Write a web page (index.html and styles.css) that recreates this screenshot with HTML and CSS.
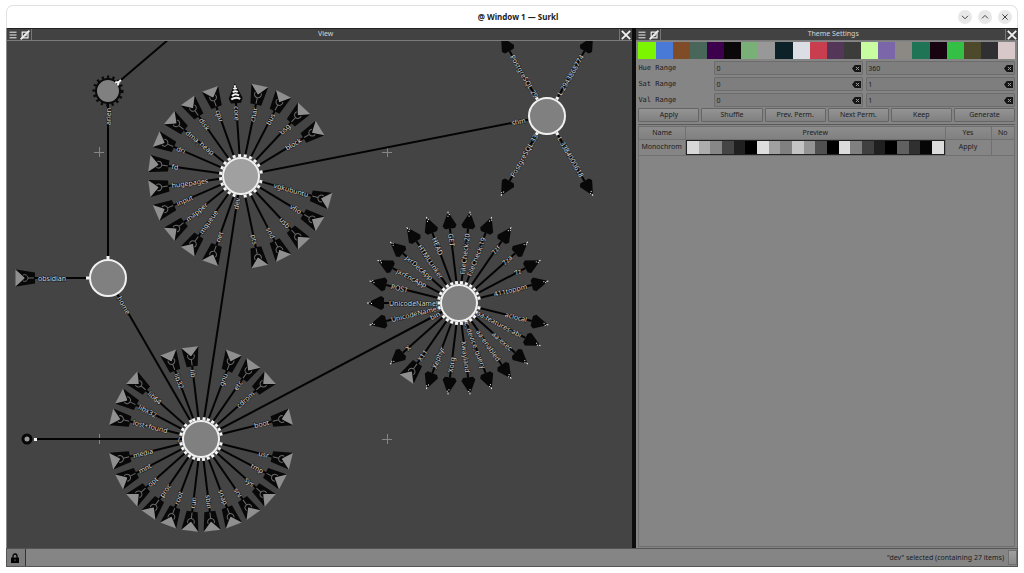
FILE: index.html
```html
<!DOCTYPE html>
<html lang="en">
<head>
<meta charset="utf-8">
<title>@ Window 1 — Surkl</title>
<link rel="stylesheet" href="styles.css">
</head>
<body>
<svg class="defs" aria-hidden="true">
  <symbol id="i-menu" viewBox="0 0 8 8"><path d="M.5 1.2h7M.5 4h7M.5 6.8h7" stroke="#eee" stroke-width="1"/></symbol>
  <symbol id="i-split" viewBox="0 0 10 10"><path d="M2.2 2.2h5.8v5.6H2.2z" fill="none" stroke="#eee" stroke-width="1.2"/><path d="M4.5 4.2h2v2h-2z" fill="#eee"/><path d="M.6 9.4L9.4.6" stroke="#eee" stroke-width="1.8"/></symbol>
  <symbol id="i-close" viewBox="0 0 10 10"><path d="M.8.8l8.4 8.4M9.2.8L.8 9.2" stroke="#f2f2f2" stroke-width="1.8"/></symbol>
  <symbol id="i-clear" viewBox="0 0 9 7"><path d="M0 3.5L2.8 0H9v7H2.8z" fill="#151515"/><path d="M3.9 1.9l3.2 3.2M7.1 1.9L3.9 5.1" stroke="#999" stroke-width="1"/></symbol>
  <symbol id="i-lock" viewBox="0 0 8 10"><path d="M2 5V3a2 2 0 0 1 4 0v2" fill="none" stroke="#000" stroke-width="1.3"/><path d="M0 4.6h8V10H0z"/><path d="M3.6 6.2h.8v2h-.8z" fill="#777"/></symbol>
</svg>
<div class="window">
  <header class="titlebar">
    <h1 class="titlebar__text">@ Window 1 — Surkl</h1>
    <div class="titlebar__buttons">
      <button class="wm" aria-label="Minimize"><svg viewBox="0 0 14 14"><path d="M4 5.8l3 3 3-3"/></svg></button>
      <button class="wm" aria-label="Maximize"><svg viewBox="0 0 14 14"><path d="M4 8.4l3-3 3 3"/></svg></button>
      <button class="wm" aria-label="Close"><svg viewBox="0 0 14 14"><path d="M4.4 4.4l5.2 5.2M9.6 4.4L4.4 9.6"/></svg></button>
    </div>
  </header>

  <main class="workspace">
    <section class="pane pane--view">
      <div class="pane__head">
        <button class="tool" aria-label="Menu"><svg class="ic8"><use href="#i-menu"/></svg></button>
        <button class="tool" aria-label="Split"><svg class="ic10"><use href="#i-split"/></svg></button>
        <h2 class="pane__title">View</h2>
        <button class="tool tool--close" aria-label="Close view"><svg class="ic10"><use href="#i-close"/></svg></button>
      </div>
      <div class="canvas"><svg id="graph" class="graph" role="img" aria-label="File tree"></svg></div>
    </section>

    <section class="pane pane--theme">
      <div class="pane__head">
        <button class="tool" aria-label="Menu"><svg class="ic8"><use href="#i-menu"/></svg></button>
        <button class="tool" aria-label="Split"><svg class="ic10"><use href="#i-split"/></svg></button>
        <h2 class="pane__title">Theme Settings</h2>
        <button class="tool tool--close" aria-label="Close theme settings"><svg class="ic10"><use href="#i-close"/></svg></button>
      </div>
      <div class="theme">
        <div class="palette" id="palette"></div>
        <form class="ranges">
          <label for="hue-min">Hue Range</label>
          <span class="field"><input id="hue-min" value="0"><button type="button" aria-label="Clear"><svg><use href="#i-clear"/></svg></button></span>
          <span class="field"><input aria-label="Hue maximum" value="360"><button type="button" aria-label="Clear"><svg><use href="#i-clear"/></svg></button></span>
          <label for="sat-min">Sat Range</label>
          <span class="field"><input id="sat-min" value="0"><button type="button" aria-label="Clear"><svg><use href="#i-clear"/></svg></button></span>
          <span class="field"><input aria-label="Saturation maximum" value="1"><button type="button" aria-label="Clear"><svg><use href="#i-clear"/></svg></button></span>
          <label for="val-min">Val Range</label>
          <span class="field"><input id="val-min" value="0"><button type="button" aria-label="Clear"><svg><use href="#i-clear"/></svg></button></span>
          <span class="field"><input aria-label="Value maximum" value="1"><button type="button" aria-label="Clear"><svg><use href="#i-clear"/></svg></button></span>
        </form>
        <div class="actions">
          <button>Apply</button><button>Shuffle</button><button>Prev. Perm.</button><button>Next Perm.</button><button>Keep</button><button>Generate</button>
        </div>
        <div class="saved">
          <table>
            <thead><tr><th class="col-name">Name</th><th>Preview</th><th class="col-yes">Yes</th><th class="col-no">No</th></tr></thead>
            <tbody><tr><td class="name">Monochrom</td><td class="preview"><div class="palette palette--small" id="preview"></div></td><td class="yes"><button>Apply</button></td><td></td></tr></tbody>
          </table>
        </div>
      </div>
    </section>
  </main>

  <footer class="status">
    <button class="status__lock" aria-label="Lock"><svg><use href="#i-lock"/></svg></button>
    <div class="status__field"><span>"dev" selected (containing 27 items)</span><i class="status__grip"></i></div>
  </footer>
</div>
<script src="graph.js"></script>
</body>
</html>
```

FILE: styles.css
```css
* { box-sizing: border-box; }
body {
  margin: 0;
  background: #fff;
  color: #1c1c1c;
  font: 7px/10px "Noto Sans", sans-serif;
}
button, input { font: inherit; color: inherit; margin: 0; padding: 0; border: 0; background: none; }
button { display: flex; align-items: center; justify-content: center; }
h1, h2 { margin: 0; font-size: inherit; }
.defs { position: absolute; width: 0; height: 0; }

.window { display: flex; flex-direction: column; height: 100vh; padding: 5px 6px 6px; }

.titlebar {
  display: grid;
  grid-template-columns: 1fr auto 1fr;
  align-items: center;
  flex: none;
  height: 23px;
  padding-left: 12px;
  border: 1px solid #e2e2e2;
  border-bottom: 0;
  border-radius: 7px 7px 0 0;
}
.titlebar__text { grid-column: 2; font-size: 8px; font-weight: 700; color: #222; }
.titlebar__buttons { display: flex; justify-content: flex-end; gap: 6px; padding-right: 5px; }
.wm { width: 14px; height: 14px; border-radius: 50%; background: #e8e8e8; }
.wm svg { width: 14px; height: 14px; fill: none; stroke: #444; stroke-width: 1; }

.workspace { display: grid; grid-template-columns: minmax(0, 626fr) minmax(0, 382fr); gap: 4px; flex: 1; min-height: 0; background: #0c0c0c; border-left: 1px solid #888; }
.pane { display: flex; flex-direction: column; min-width: 0; min-height: 0; }
.pane__head { display: flex; align-items: stretch; flex: none; height: 13px; background: #424242; border-top: 1px solid #222; border-bottom: 1px solid #7c7c7c; }
.pane__title { flex: 1; text-align: center; font-weight: 400; line-height: 10px; color: #d4d4d4; border-left: 1px solid #777; }
.tool { width: 12px; }
.tool--close { width: 13px; border-left: 1px solid #777; }
.ic8 { width: 8px; height: 8px; }
.ic10 { width: 10px; height: 10px; }

.canvas { flex: 1; min-height: 0; overflow: hidden; background: #444; }
.graph { display: block; width: 100%; height: 100%; }
.spoke { stroke: #040404; stroke-width: 2; }
.tick { fill: #f4f4f4; }
.hub { fill: #808080; stroke: #f0f0f0; stroke-width: 2; }
.hub--selected { fill: #a0a0a0; }
.hub--closed { fill: #808080; stroke: #0a0a0a; stroke-width: 2; }
.teeth { fill: none; stroke: #0a0a0a; stroke-width: 5; stroke-dasharray: 2 3; }
.root-dot { fill: #999; stroke: #060606; stroke-width: 3; }
.cross { stroke: #858585; stroke-width: 1; }
.label { font-size: 7px; fill: #d2d2d2; stroke: #161616; stroke-width: 1; paint-order: stroke; dominant-baseline: central; }
.dark { fill: #080808; }
.flap { fill: #8f8f8f; }
.thin { fill: none; stroke: #6a6a6a; stroke-width: 1; }
.bright { fill: #f4f4f4; }

.theme { display: flex; flex-direction: column; flex: 1; min-height: 0; padding: 1px 2px; background: #858585; border-right: 1px solid #666; }
.palette { display: flex; flex: none; height: 17px; }
.swatch { flex: 1; }
.palette--small { height: 15px; border: 1px solid #222; }

.ranges { display: grid; grid-template-columns: 73px 1fr 1fr; gap: 2px 3px; padding-top: 2px; }
.ranges label { font: 7px/14px "DejaVu Sans Mono", monospace; }
.field { display: flex; align-items: center; height: 14px; min-width: 0; padding: 0 1px; background: #7e7e7e; border: 1px solid #6c6c6c; border-radius: 1px; }
.field input { flex: 1; min-width: 0; height: 12px; outline: 0; }
.field svg { width: 9px; height: 7px; }

.actions { display: grid; grid-template-columns: repeat(6, 1fr); gap: 2px; flex: none; padding: 1px 0 2px; border-bottom: 1px solid #5a5a5a; }
.actions button { height: 14px; background: linear-gradient(#949494, #808080); border: 1px solid #656565; border-radius: 1px; }

.saved { flex: 1; min-height: 0; margin-top: 1px; border: 1px solid #6e6e6e; }
table { width: 100%; table-layout: fixed; border-collapse: collapse; }
th { height: 12px; padding: 0; font-weight: 400; background: linear-gradient(#8c8c8c, #808080); border-right: 1px solid #707070; border-bottom: 1px solid #707070; }
td { height: 15px; padding: 0; border-right: 1px solid #707070; border-bottom: 1px solid #707070; }
th:last-child, td:last-child { border-right: 0; }
.col-name { width: 46px; }
.col-yes { width: 46px; }
.col-no { width: 23px; }
.name { padding-left: 2px; white-space: nowrap; }
.yes button { width: 100%; height: 14px; }

.status { display: flex; flex: none; height: 19px; background: #858585; border: 1px solid #555; }
.status__lock { width: 19px; padding-right: 2px; background: #7c7c7c; border-right: 1px solid #333; }
.status__lock svg { width: 8px; height: 10px; }
.status__field { display: flex; flex: 1; align-items: center; justify-content: flex-end; gap: 4px; }
.status__grip { width: 9px; height: 15px; background: linear-gradient(#a0a0a0, #8a8a8a); border: 1px solid #707070; }
```

FILE: graph.js
```javascript
const themeColors = ["#7cf500","#4a7ad8","#804c28","#48665a","#3c004c","#0a0808","#78b078","#989898","#0c2228","#dcdee6","#c83e4e","#533658","#3c3c3a","#c8fca0","#7a66a8","#8c8884","#207456","#180410","#34c044","#4c4a2a","#303032","#d8c8ca"];
const monochrome = ["#d8d8d8","#adadad","#878787","#454545","#202020","#000","#dedede","#a0a0a0","#808080","#c4c4c4","#949494","#505050","#000","#dcdcdc","#808080","#404040","#202020","#000","#606060","#303030","#060606","#dcdcdc"];

function fillPalette(id, colors) {
  const box = document.getElementById(id);
  for (const c of colors) {
    const s = document.createElement("span");
    s.className = "swatch";
    s.style.background = c;
    box.append(s);
  }
}
fillPalette("palette", themeColors);
fillPalette("preview", monochrome);

const step26 = 360 / 26, step23 = 360 / 23;
const HUB = 19, RIM = 21, LABEL = 70;

// Each item: [slot, name, kind]; the angle is slot * step, clockwise from the right.
const hubs = {
  root: { x: 194, y: 398, step: step26, items: [
    [1,"usr"],[2,"tmp"],[3,"sys"],[4,"srv"],[5,"snap"],[6,"sbin"],[7,"run"],[8,"root"],[9,"proc"],[10,"opt"],[11,"mnt"],[12,"media"],
    [14,"lost+found"],[15,"libx32"],[16,"lib64"],[18,"lib32"],[19,"lib"],[21,"gnu"],[22,"etc"],[23,"cdrom"],[25,"boot"]] },
  dev: { x: 234, y: 135, step: step23, selected: true, items: [
    [1,"vgkubuntu"],[2,"vfio"],[3,"usb"],[4,"snd"],[5,"pts"],[7,"net"],[8,"mqueue"],[9,"mapper"],[10,"input"],[11,"hugepages"],
    [12,"fd"],[13,"dri"],[14,"dma_heap"],[15,"disk"],[16,"cpu"],[17,"core","device"],[18,"char"],[19,"bus"],[20,"bsg"],[21,"block"]] },
  bin: { x: 452, y: 262, step: step26, items: [
    [1,"aclocal","file"],[2,"aa-features-abi","file"],[3,"aa-exec","file"],[4,"aa-enabled","file"],[5,"c_device_query","file"],
    [6,"Xwayland","file"],[7,"Xorg","file"],[8,"Xephyr","file"],[9,"X11"],[10,"X","file"],[12,"UnicodeName!","file"],
    [13,"UnicodeName!","file"],[14,"POST","file"],[15,"jxrEncApp","file"],[16,"jxrDecApp","file"],[17,"HTMLLinker","file"],
    [18,"HEAD","file"],[19,"GET","file"],[20,"FileCheck-20","file"],[21,"FileCheck-19","file"],[22,"7zr","file"],[23,"7za","file"],
    [24,"7z","file"],[25,"411toppm","file"]] },
  shm: { x: 540, y: 75, step: 60, items: [
    [1,"L.3384000618","file"],[2,"PostgreSQL.33","file"],[4,"PostgreSQL.29","file"],[5,"L.2943868774","file"]] },
  home: { x: 101, y: 237, step: 60, items: [[3,"obsidian"]] },
  arlen: { x: 101, y: 50, r: 13, closed: true, step: 60, items: [] }
};
// [parent, child, name shown beside the child]
const links = [["root","dev","dev"],["root","bin","bin"],["root","home","home"],["dev","shm","shm"],["home","arlen","arlen"]];

const icons = {
  dir: `<path class="dark" d="M73-5.5L92-8.5V8.5L73 5.5z"/><path class="flap" d="M92.500-8.5L83 0L92.500 8.5z"/>
    <path class="dark" d="M85-2.5a3 3 0 1 0 0 5L83 0z"/><path class="thin" d="M85-3a3.4 3.4 0 1 0 0 6M80 0H74"/>`,
  file: `<path class="dark" d="M75-5L78-7L92 0L78 7L75 5z"/><path class="bright" d="M87-1h1v1h-1zM90-.5h2v1h-2zM88.500.5h1v1h-1z"/>`,
  device: `<path class="dark" d="M73-5L78-7L93 0L78 7L73 5z"/>
    <path d="M77-4.500q3 4.500 0 9M80.500-3.500q3 3.500 0 7M84-2.500q2 2.500 0 5M87-1.500q2 1.500 0 3M90-1v2" fill="none" stroke="#f4f4f4" stroke-width="2"/>`
};

let spokes = "", bodies = "", labels = "";
const at = (h, deg) => `translate(${h.x} ${h.y}) rotate(${deg})`;

function addLabel(h, deg, r, text, outer) {
  const a = ((deg % 360) + 360) % 360;
  const left = a >= 89 && a < 270;
  const anchor = left === outer ? "start" : "end";
  const flip = left ? `rotate(180) translate(${-r} 0)` : `translate(${r} 0)`;
  labels += `<text class="label" text-anchor="${anchor}" transform="${at(h, deg)} ${flip}">${text}</text>`;
}
function addTick(h, deg) {
  bodies += `<rect class="tick" x="${RIM - 2}" y="-1.5" width="3" height="3" transform="${at(h, deg)}"/>`;
}

for (const [p, c, name] of links) {
  const a = hubs[p], b = hubs[c];
  spokes += `<line class="spoke" x1="${a.x}" y1="${a.y}" x2="${b.x}" y2="${b.y}"/>`;
  const deg = Math.atan2(a.y - b.y, a.x - b.x) * 180 / Math.PI;
  addTick(a, deg + 180);
  addLabel(b, deg, b.closed ? 17 : 22, name, false);
}
for (const h of Object.values(hubs)) {
  for (const [slot, name, kind = "dir"] of h.items) {
    const deg = slot * h.step;
    spokes += `<line class="spoke" x1="${HUB}" x2="75" transform="${at(h, deg)}"/>`;
    bodies += `<g transform="${at(h, deg)}">${icons[kind]}</g>`;
    addTick(h, deg);
    addLabel(h, deg, LABEL, name, true);
  }
  bodies += h.closed
    ? `<circle class="teeth" cx="${h.x}" cy="${h.y}" r="13"/><circle class="hub--closed" cx="${h.x}" cy="${h.y}" r="12"/>`
    : `<circle class="hub${h.selected ? " hub--selected" : ""}" cx="${h.x}" cy="${h.y}" r="18"/>`;
}

const { root, arlen } = hubs;
spokes += `<line class="spoke" x1="28" y1="${root.y}" x2="${root.x}" y2="${root.y}"/>`;
spokes += `<line class="spoke" x1="${arlen.x}" y1="${arlen.y}" x2="162" y2="-2"/>`;
bodies += `<circle class="root-dot" cx="20" cy="${root.y}" r="4"/><rect class="tick" x="27" y="${root.y - 1}" width="3" height="3"/>`;
bodies += `<path d="M11-2L14 0H17M11 2L14 0" fill="none" stroke="#f4f4f4" stroke-width="2" transform="${at(arlen, -40)}"/>`;
addLabel(root, 180, 21, "/", false);

let crosses = "";
for (const x of [92, 380]) for (const y of [111, 398]) crosses += `<path class="cross" d="M${x - 5} ${y}.5h10M${x}.5 ${y - 5}v10"/>`;

document.getElementById("graph").innerHTML = crosses + spokes + bodies + labels;
```
